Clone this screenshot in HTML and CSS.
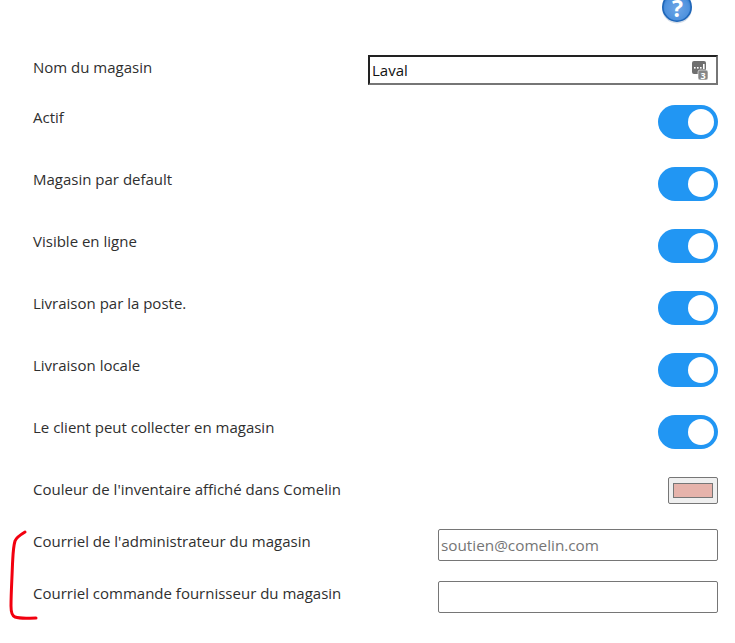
FILE: index.html
```html
<!DOCTYPE html>
<html lang="fr">
<head>
<meta charset="utf-8">
<title>Magasin</title>
<link rel="stylesheet" href="styles.css">
</head>
<body>
<main class="form">
  <div class="help">
    <svg class="help-icon" width="34" height="36" viewBox="0 0 34 36" aria-hidden="true">
      <defs>
        <radialGradient id="helpFill" cx="0.5" cy="0.55" r="0.55">
          <stop offset="0" stop-color="#6ea6e6"/>
          <stop offset="0.75" stop-color="#4f92de"/>
          <stop offset="1" stop-color="#2f78c8"/>
        </radialGradient>
      </defs>
      <circle cx="17" cy="18.5" r="15" fill="#d5deea"/>
      <circle cx="17" cy="17" r="14.2" fill="url(#helpFill)" stroke="#1f66b8" stroke-width="1.6"/>
      <text x="17.6" y="27" text-anchor="middle" class="help-mark">?</text>
    </svg>
  </div>

  <div class="row row-name">
    <label class="label">Nom du magasin</label>
    <div class="name-box">
      <span class="name-value">Laval</span>
      <svg class="name-icon" width="16" height="19" viewBox="0 0 16 19" aria-hidden="true">
        <rect x="0" y="0" width="14" height="13" rx="2" fill="#6f6f6f"/>
        <rect x="2" y="6" width="1.6" height="1.6" fill="#fff"/>
        <rect x="5" y="6" width="1.6" height="1.6" fill="#fff"/>
        <rect x="8" y="6" width="1.6" height="1.6" fill="#fff"/>
        <rect x="11" y="3" width="1.6" height="5" fill="#fff"/>
        <rect x="6" y="9" width="10" height="10" rx="2" fill="#858585" stroke="#fff" stroke-width="0.6"/>
        <text x="11" y="17.7" text-anchor="middle" class="name-badge">3</text>
      </svg>
    </div>
  </div>

  <div class="row row-toggle row-first">
    <label class="label">Actif</label>
    <span class="toggle"><span class="knob"></span></span>
  </div>
  <div class="row row-toggle">
    <label class="label">Magasin par default</label>
    <span class="toggle"><span class="knob"></span></span>
  </div>
  <div class="row row-toggle">
    <label class="label">Visible en ligne</label>
    <span class="toggle"><span class="knob"></span></span>
  </div>
  <div class="row row-toggle">
    <label class="label">Livraison par la poste.</label>
    <span class="toggle"><span class="knob"></span></span>
  </div>
  <div class="row row-toggle">
    <label class="label">Livraison locale</label>
    <span class="toggle"><span class="knob"></span></span>
  </div>
  <div class="row row-toggle">
    <label class="label">Le client peut collecter en magasin</label>
    <span class="toggle"><span class="knob"></span></span>
  </div>

  <div class="row row-color">
    <label class="label">Couleur de l'inventaire affiché dans Comelin</label>
    <span class="swatch"><span class="swatch-fill"></span></span>
  </div>
  <div class="row row-mail-first">
    <label class="label">Courriel de l'administrateur du magasin</label>
    <input class="mail" type="text" placeholder="soutien@comelin.com">
  </div>
  <div class="row row-mail">
    <label class="label">Courriel commande fournisseur du magasin</label>
    <input class="mail" type="text">
  </div>

  <svg class="bracket" width="40" height="100" viewBox="0 0 40 100" aria-hidden="true">
    <path d="M25 4 C20 7 16 10 15 13 C13 20 13 28 12.5 36 C12 50 11 66 11 78 C11 85 12 88 15 89 C21 91 28 90 36 90"/>
  </svg>
</main>
</body>
</html>
```
FILE: styles.css
```css
* { box-sizing: border-box; }
html, body { margin: 0; padding: 0; background: #fff; }
body { height: 643px; overflow: hidden; font-family: "Open Sans", "Noto Sans", sans-serif; color: #2f2f2f; }

.form { position: relative; padding: 0 17px 0 33px; width: 735px; height: 643px; }

.help { display: flex; justify-content: flex-end; height: 55px; padding-right: 24px; }
.help-icon { margin-top: -10px; display: block; }
.help-mark { font: 700 23px "Open Sans", sans-serif; fill: #fff; }

.row { display: flex; justify-content: space-between; align-items: flex-start; }
.label { display: block; font-size: 15px; line-height: 24px; }

.row-name { height: 30px; }
.row-toggle { height: 34px; margin-top: 28px; }
.row-first { margin-top: 20px; }
.row-color { height: 27px; margin-top: 28px; }
.row-mail-first { height: 32px; margin-top: 25px; }
.row-mail { height: 32px; margin-top: 20px; }

.name-box { width: 350px; height: 30px; display: flex; align-items: center; justify-content: space-between;
  border: 2px solid #767676; border-top-color: #222; border-left-color: #222; padding: 0 8px 0 2px; }
.name-value { font-size: 15px; color: #111; }
.name-icon { display: block; margin-top: 1px; overflow: visible; }
.name-badge { font: 700 9px "Open Sans", sans-serif; fill: #fff; }

.toggle { width: 60px; height: 34px; border-radius: 17px; background: #2196f3; display: flex; align-items: center; justify-content: flex-end; padding-right: 4px; }
.knob { width: 26px; height: 26px; border-radius: 50%; background: #fff; }

.swatch { width: 50px; height: 27px; background: #efefef; border: 1px solid #767676; border-radius: 2px; padding: 5px 4px; display: block; }
.swatch-fill { display: block; height: 100%; background: #e6b3ab; border: 1px solid #767676; }

.mail { width: 280px; height: 32px; border: 1px solid #767676; border-radius: 2px; padding: 0 2px; font: 15.3px "Open Sans", sans-serif; background: #fff; outline: none; }
.mail::placeholder { color: #757575; opacity: 1; }

.bracket { position: absolute; left: 0; top: 528px; }
.bracket path { fill: none; stroke: #f2000f; stroke-width: 3; stroke-linecap: round; stroke-linejoin: round; }
```
